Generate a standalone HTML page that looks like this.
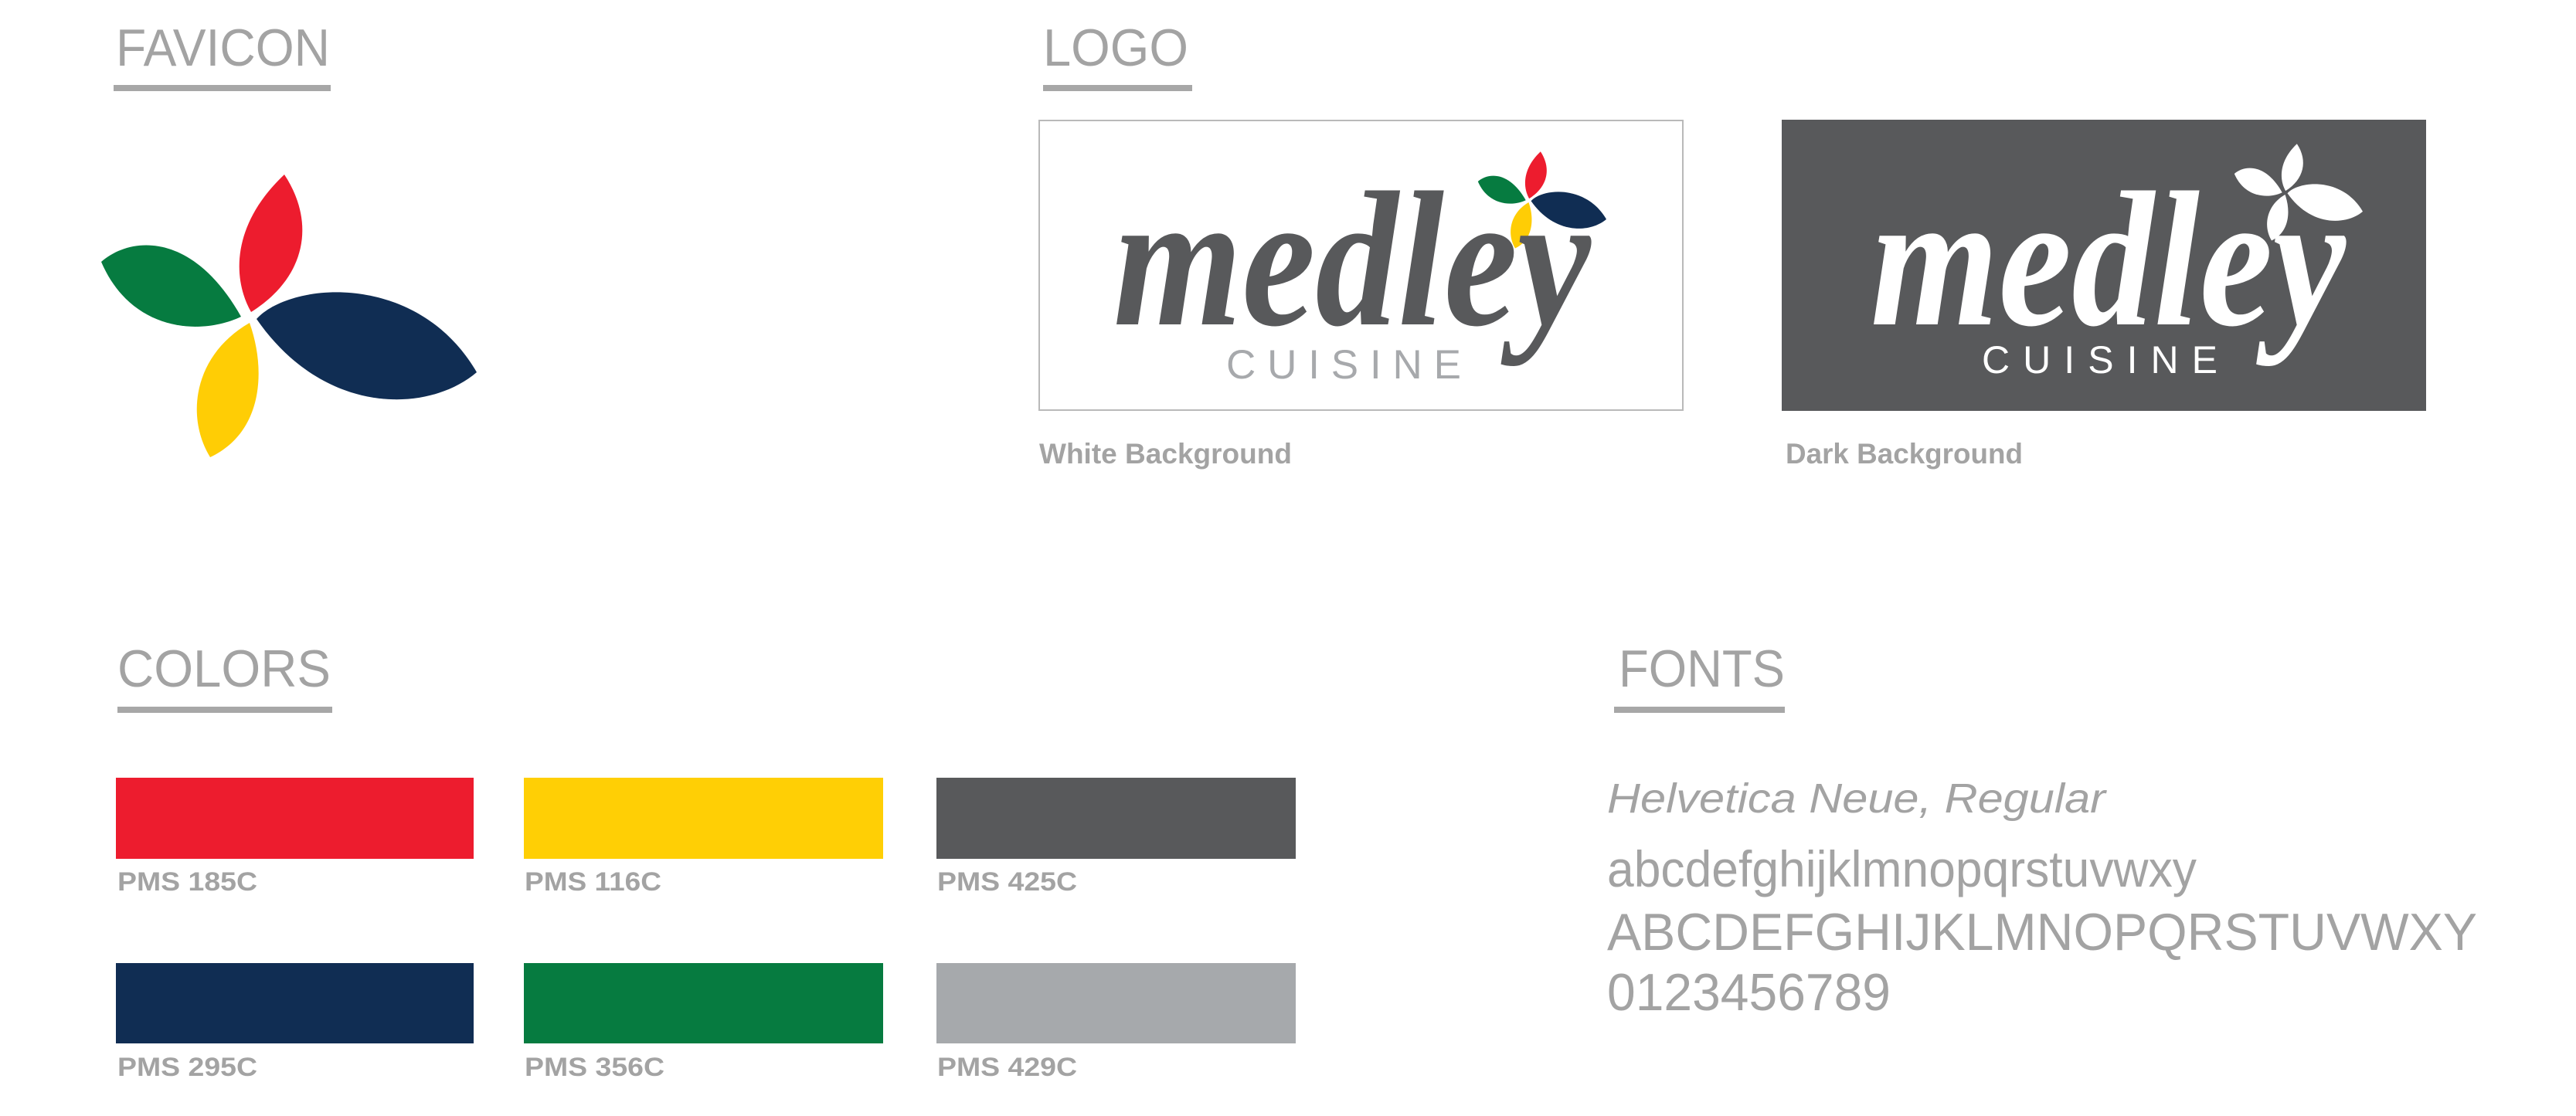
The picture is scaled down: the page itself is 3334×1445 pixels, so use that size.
<!DOCTYPE html>
<html><head><meta charset="utf-8"><style>
html,body{margin:0;padding:0;background:#fff;}
svg{display:block;}
text{font-family:"Liberation Sans",Arial,sans-serif;}
</style></head><body>
<svg width="3334" height="1445" viewBox="0 0 3334 1445" xmlns="http://www.w3.org/2000/svg">
<defs>
<g id="flower">
<path fill="#ed1c2e" d="M368,226 C300,290 300,360 325,404 C395,360 410,290 368,226 Z"/>
<path fill="#067b40" d="M131,339 C170,305 250,300 312,410 C260,435 170,430 131,339 Z"/>
<path fill="#ffcd05" d="M323,418 C345,480 340,560 272,592 C240,540 250,460 323,418 Z"/>
<path fill="#102d53" d="M332,413 C375,365 540,350 617,482 C555,535 420,540 332,413 Z"/>
</g>
<g id="flowerw" fill="#fff">
<path d="M368,226 C300,290 300,360 325,404 C395,360 410,290 368,226 Z"/>
<path d="M131,339 C170,305 250,300 312,410 C260,435 170,430 131,339 Z"/>
<path d="M323,418 C345,480 340,560 272,592 C240,540 250,460 323,418 Z"/>
<path d="M332,413 C375,365 540,350 617,482 C555,535 420,540 332,413 Z"/>
</g>
</defs>

<g fill="#a3a3a3" font-size="68">
<text x="150" y="85" textLength="277" lengthAdjust="spacingAndGlyphs">FAVICON</text>
<text x="1350" y="85" textLength="188" lengthAdjust="spacingAndGlyphs">LOGO</text>
<text x="152" y="889" textLength="276" lengthAdjust="spacingAndGlyphs">COLORS</text>
<text x="2095" y="889" textLength="215" lengthAdjust="spacingAndGlyphs">FONTS</text>
</g>
<g fill="#a7a7a7">
<rect x="147" y="110" width="281" height="8"/>
<rect x="1350" y="110" width="193" height="8"/>
<rect x="152" y="915" width="278" height="8"/>
<rect x="2089" y="915" width="221" height="8"/>
</g>

<use href="#flower"/>

<rect x="1345" y="156" width="833" height="375" fill="#fff" stroke="#b9b9b9" stroke-width="2"/>
<use href="#flower" transform="translate(1868,119) scale(0.342)"/>
<text x="1441" y="420" style="font-family:'Liberation Serif',serif;font-style:italic;font-weight:bold" font-size="250" fill="#58595b" textLength="618" lengthAdjust="spacingAndGlyphs">medley</text>
<text x="1587" y="490" font-size="53" fill="#a7a9ac" textLength="304" lengthAdjust="spacing">CUISINE</text>
<text x="1345" y="600" font-size="37" font-weight="bold" fill="#a3a3a3" textLength="327" lengthAdjust="spacingAndGlyphs">White Background</text>

<rect x="2306" y="155" width="834" height="377" fill="#58595b"/>
<use href="#flowerw" transform="translate(2847,109) scale(0.342)"/>
<text x="2421" y="420" style="font-family:'Liberation Serif',serif;font-style:italic;font-weight:bold" font-size="250" fill="#fff" textLength="615" lengthAdjust="spacingAndGlyphs">medley</text>
<text x="2565" y="483" font-size="50" fill="#fff" textLength="305" lengthAdjust="spacing">CUISINE</text>
<text x="2311" y="600" font-size="37" font-weight="bold" fill="#a3a3a3" textLength="307" lengthAdjust="spacingAndGlyphs">Dark Background</text>

<rect x="150" y="1007" width="463" height="105" fill="#ed1c2e"/>
<rect x="678" y="1007" width="465" height="105" fill="#ffcf05"/>
<rect x="1212" y="1007" width="465" height="105" fill="#58595b"/>
<rect x="150" y="1247" width="463" height="104" fill="#102d53"/>
<rect x="678" y="1247" width="465" height="104" fill="#067b40"/>
<rect x="1212" y="1247" width="465" height="104" fill="#a6a9ac"/>
<g fill="#a3a3a3" font-size="34" font-weight="bold">
<text x="152" y="1153" textLength="181" lengthAdjust="spacingAndGlyphs">PMS 185C</text>
<text x="679" y="1153" textLength="177" lengthAdjust="spacingAndGlyphs">PMS 116C</text>
<text x="1213" y="1153" textLength="181" lengthAdjust="spacingAndGlyphs">PMS 425C</text>
<text x="152" y="1393" textLength="181" lengthAdjust="spacingAndGlyphs">PMS 295C</text>
<text x="679" y="1393" textLength="181" lengthAdjust="spacingAndGlyphs">PMS 356C</text>
<text x="1213" y="1393" textLength="181" lengthAdjust="spacingAndGlyphs">PMS 429C</text>
</g>

<g fill="#a3a3a3">
<text x="2080" y="1052" font-size="54" font-style="italic" textLength="645" lengthAdjust="spacingAndGlyphs">Helvetica Neue, Regular</text>
<text x="2080" y="1148" font-size="66" textLength="763" lengthAdjust="spacingAndGlyphs">abcdefghijklmnopqrstuvwxy</text>
<text x="2080" y="1230" font-size="68" textLength="1126" lengthAdjust="spacingAndGlyphs">ABCDEFGHIJKLMNOPQRSTUVWXY</text>
<text x="2080" y="1308" font-size="68" textLength="367" lengthAdjust="spacingAndGlyphs">0123456789</text>
</g>
</svg>
</body></html>
